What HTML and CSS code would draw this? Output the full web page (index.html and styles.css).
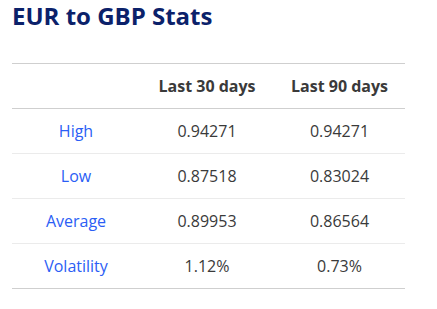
FILE: index.html
```html
<!DOCTYPE html>
<html>
<head>
<meta charset="utf-8">
<link rel="stylesheet" href="styles.css">
</head>
<body>
<div class="stats">
  <h2 class="title">EUR to GBP Stats</h2>
  <table class="table">
    <colgroup>
      <col class="col-label">
      <col class="col-30">
      <col class="col-90">
    </colgroup>
    <thead>
      <tr><th></th><th>Last 30 days</th><th>Last 90 days</th></tr>
    </thead>
    <tbody>
      <tr><td class="label">High</td><td>0.94271</td><td>0.94271</td></tr>
      <tr><td class="label">Low</td><td>0.87518</td><td>0.83024</td></tr>
      <tr><td class="label">Average</td><td>0.89953</td><td>0.86564</td></tr>
      <tr><td class="label">Volatility</td><td>1.12%</td><td>0.73%</td></tr>
    </tbody>
  </table>
</div>
</body>
</html>
```
FILE: styles.css
```css
html, body {
  margin: 0;
  padding: 0;
  background: #fff;
}
body {
  font-family: "Open Sans", "Noto Sans", sans-serif;
  color: #3a3a3a;
}
.stats {
  padding: 1px 32px 0 12px;
}
.title {
  margin: 0;
  font-size: 24px;
  line-height: 30px;
  font-weight: 700;
  color: #0b216a;
}
.table {
  margin-top: 32px;
  width: 393px;
  border-collapse: collapse;
  table-layout: fixed;
  border-top: 1px solid #cfcfcf;
  border-bottom: 1px solid #cfcfcf;
}
.col-label { width: 128px; }
.col-30 { width: 134px; }
.col-90 { width: 131px; }
.table th, .table td {
  text-align: center;
  font-size: 16px;
  height: 44px;
  padding: 0;
}
.table th {
  font-weight: 700;
  color: #3a3a3a;
  border-bottom: 1px solid #cfcfcf;
}
.table td {
  border-bottom: 1px solid #ebebeb;
}
.table tbody tr:last-child td {
  border-bottom: 1px solid #cfcfcf;
}
.label {
  color: #2b5ef5;
}
```
